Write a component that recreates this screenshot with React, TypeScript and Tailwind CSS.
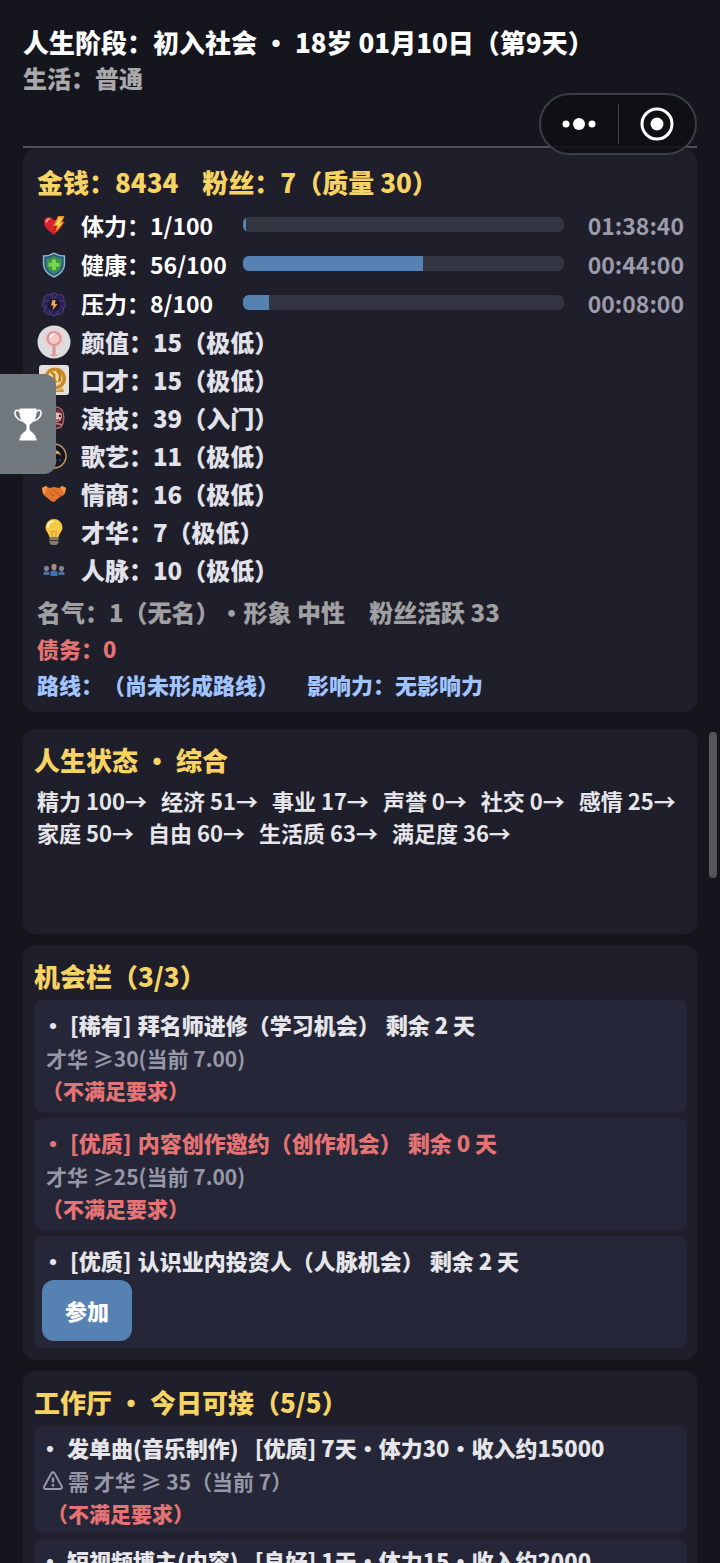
import type { ReactNode } from 'react'
import { clsx } from 'clsx'

const HeartIcon = () => (
  <svg viewBox="0 0 24 24" className="size-6">
    <path d="M12 21C7 17 2 13 2 8.500 2 5 4.300 3 7 3c2.200 0 3.800 1 5 3l3 1 1 6z" fill="#d8232f" />
    <path d="M4.500 8c0-1.800 1.200-2.800 2.800-2.800" stroke="#f79a94" strokeWidth="1.800" fill="none" strokeLinecap="round" />
    <path d="M12 21c4-4 7-6 9-10l-4-3-4 3z" fill="#a91b22" />
    <path d="M16 2h6.500l-2.500 6h2.500L13 19l2-7h-4z" fill="#f08c1f" />
    <path d="M17 3.500h3.500L17.500 9.500h2.500l-5 6.500 1.500-5h-3z" fill="#ffd45c" />
  </svg>
)

const ShieldIcon = () => (
  <svg viewBox="0 0 24 26" className="h-[26px] w-6">
    <path d="M12 1c3 2 6 3 10.500 3v8c0 6-4 10-10.500 13C5.500 22 1.500 18 1.500 12V4C6 4 9 3 12 1z" fill="#2d5a80" stroke="#8fb9cf" strokeWidth="1.400" />
    <path d="M12 4c2.500 1.500 5 2.200 7.800 2.500V12c0 4.500-3 7.600-7.800 10-4.800-2.400-7.800-5.500-7.800-10V6.500C7 6.200 9.500 5.500 12 4z" fill="#3a9150" />
    <path d="M10 7.500h4v3.300h3.500v4H14V18h-4v-3.200H6.500v-4H10z" fill="#7bd44e" />
  </svg>
)

const StressIcon = () => (
  <svg viewBox="0 0 24 24" className="size-6">
    <g fill="#2b2350" stroke="#4a3c80" strokeWidth="1.200">
      <circle cx="12" cy="5" r="4" />
      <circle cx="6.500" cy="7" r="4.500" />
      <circle cx="17.500" cy="7" r="4.500" />
      <circle cx="4.500" cy="12.500" r="4" />
      <circle cx="19.500" cy="12.500" r="4" />
      <circle cx="7" cy="18" r="4.500" />
      <circle cx="17" cy="18" r="4.500" />
      <circle cx="12" cy="19.500" r="4" />
    </g>
    <circle cx="12" cy="13" r="6.500" fill="#1d1836" />
    <path d="M13.500 8h-3L9 13.500h2.500l-1 5L15.500 12h-2.500z" fill="#f3a552" />
  </svg>
)

const MirrorIcon = () => (
  <svg viewBox="0 0 34 34" className="size-[34px]">
    <circle cx="17" cy="17" r="16.500" fill="#dddcde" />
    <circle cx="17" cy="13.500" r="10.500" fill="#eccfd0" />
    <circle cx="17" cy="13.500" r="6.500" fill="#f4c8c9" stroke="#dc949a" strokeWidth="2.200" />
    <path d="M13.500 12c.5-1.800 1.600-2.600 3-2.800" stroke="#fff3f2" strokeWidth="2" fill="none" strokeLinecap="round" />
    <path d="M17 21v9" stroke="#dc949a" strokeWidth="3" strokeLinecap="round" />
    <path d="M14.500 30h5" stroke="#e3a3a7" strokeWidth="2" strokeLinecap="round" />
  </svg>
)

const SpeechIcon = () => (
  <svg viewBox="0 0 30 30" className="size-[30px]">
    <rect width="30" height="30" rx="3" fill="#e4e1dc" />
    <circle cx="16" cy="13.500" r="11" fill="#c98a2a" />
    <circle cx="16" cy="13.500" r="7.500" fill="#f2dba9" />
    <path d="M12 8c3 0 4 2 3 5l2 5M18 6c3 2 4 6 2 11" stroke="#c07f1f" strokeWidth="2.500" fill="none" />
    <path d="M8 24c4 2 12 2 16-1l1 4H8z" fill="#d69a35" />
  </svg>
)

const MaskIcon = () => (
  <svg viewBox="0 0 24 24" className="size-6">
    <path d="M5 3c4-3 12-3 15 1 3 5 2 13-1 17-4 2-10 2-14 0C1 16 1 8 5 3z" fill="#47242f" stroke="#a4666f" strokeWidth="1.400" />
    <ellipse cx="14.500" cy="10" rx="5.500" ry="6" fill="#e9b6b5" />
    <path d="M8 7c3-4 9-5 13-1l-1 2c-4-2-8-2-12 1z" fill="#6b3039" />
    <circle cx="13" cy="10" r="1.200" fill="#321b24" />
    <circle cx="18" cy="10" r="1.200" fill="#321b24" />
    <path d="M13 13.500c1.500 1.200 3 1.200 4.500 0" stroke="#9e303b" strokeWidth="1.500" fill="none" />
    <path d="M9 20c3-3 7-3 11-1" stroke="#c47a80" strokeWidth="1.800" fill="none" />
  </svg>
)

const SingIcon = () => (
  <svg viewBox="0 0 26 26" className="size-[26px]">
    <circle cx="13" cy="13" r="12" fill="#16141c" stroke="#c9a265" strokeWidth="1.400" />
    <path d="M13 7c4 0 6 2 7 6-1.500-2-3.500-2.500-7-2z" fill="#dba558" />
    <circle cx="15" cy="17.500" r="1" fill="#4b5578" />
    <circle cx="19" cy="17" r="1" fill="#4b5578" />
  </svg>
)

const HandshakeIcon = () => (
  <svg viewBox="0 0 26 18" className="h-[18px] w-[26px]">
    <path d="M1 3l4-2 3 2 5-1 5 1 3-2 4 2-2 7-4 2-6 5-3-1-6-5-2-2z" fill="#e2762f" />
    <path d="M12 5l3 2 5 4-1 1M9 8l4 3" stroke="#b9531e" strokeWidth="1" fill="none" />
    <path d="M1 3l4-2 1 1-3 7-1-1zM25 3l-4-2-1 1 3 7 1-1z" fill="#f29a4c" />
  </svg>
)

const BulbIcon = () => (
  <svg viewBox="0 0 20 28" className="h-7 w-5">
    <path d="M10 1a8.500 8.500 0 0 0-8.500 8.500C1.500 13 5 15.500 5.500 19.500h9c.5-4 4-6.500 4-10A8.500 8.500 0 0 0 10 1z" fill="#f6ca45" />
    <path d="M4 9c0-3 2-5 5-5.500" stroke="#fff3b5" strokeWidth="2" fill="none" strokeLinecap="round" />
    <path d="M8.500 19l-1-6 2.500 1 2.500-1-1 6" stroke="#d9982a" strokeWidth="1" fill="none" />
    <path d="M5.500 20h9v5l-2 2h-5l-2-2z" fill="#84796d" />
    <path d="M5.500 22.500h9" stroke="#3f3a3c" strokeWidth="1" />
  </svg>
)

const NetworkIcon = () => (
  <svg viewBox="0 0 22 14" className="h-[14px] w-[22px]">
    <rect x="1" y="3" width="5" height="5" rx="2" fill="#85828e" />
    <path d="M.5 12V9.500L3 8l3.500 1.500V12z" fill="#4c6f9f" />
    <rect x="16" y="3" width="5" height="5" rx="2" fill="#85828e" />
    <path d="M15.500 12V9.500L18.500 8l3 1.500V12z" fill="#4c6f9f" />
    <rect x="8.500" y="1" width="5" height="6" rx="2" fill="#b0917f" />
    <path d="M7.500 13V8.500L11 7l3.500 1.500V13z" fill="#3b70b5" />
  </svg>
)

const TrophyIcon = () => (
  <svg viewBox="0 0 28 33" className="h-[33px] w-7">
    <path d="M6 4.500C5 1.500 1 1.500 1 5c0 4 3 6.500 7.500 8M22 4.500c1-3 5-3 5 .500 0 4-3 6.500-7.500 8" fill="none" stroke="#fff" strokeWidth="1.600" />
    <path d="M5.500.500h17c.3 6-.500 10.500-3 13-1.500 1.500-3.300 2.500-4 3.500v4c0 2.500 4 3 5 6h1v3h1v2.500h-17V30h1v-3h1c1-3 5-3.500 5-6v-4c-.7-1-2.500-2-4-3.500-2.500-2.500-3.300-7-3-13z" fill="#fff" />
  </svg>
)

const WarningIcon = () => (
  <svg viewBox="0 0 22 20" className="h-5 w-[22px]" fill="none" stroke="currentColor" strokeWidth="2" strokeLinejoin="round">
    <path d="M9.400 2.200a1.900 1.900 0 0 1 3.200 0l7.200 13.300a1.700 1.700 0 0 1-1.500 2.500H3.700a1.700 1.700 0 0 1-1.500-2.500z" />
    <path d="M11 6.500v5M11 13v2.400" strokeWidth="2.400" />
  </svg>
)

const vitals = [
  { label: '体力', value: 1, time: '01:38:40', icon: <HeartIcon /> },
  { label: '健康', value: 56, time: '00:44:00', icon: <ShieldIcon /> },
  { label: '压力', value: 8, time: '00:08:00', icon: <StressIcon /> },
]

const attributes = [
  { text: '颜值：15（极低）', icon: <MirrorIcon /> },
  { text: '口才：15（极低）', icon: <SpeechIcon /> },
  { text: '演技：39（入门）', icon: <MaskIcon /> },
  { text: '歌艺：11（极低）', icon: <SingIcon /> },
  { text: '情商：16（极低）', icon: <HandshakeIcon /> },
  { text: '才华：7（极低）', icon: <BulbIcon /> },
  { text: '人脉：10（极低）', icon: <NetworkIcon /> },
]

const lifeStates = [
  '精力 100→',
  '经济 51→',
  '事业 17→',
  '声誉 0→',
  '社交 0→',
  '感情 25→',
  '家庭 50→',
  '自由 60→',
  '生活质 63→',
  '满足度 36→',
]

const opportunities = [
  { tag: '[稀有]', name: '拜名师进修（学习机会）', left: '剩余 2 天', need: '才华 ≥30(当前 7.00)' },
  { tag: '[优质]', name: '内容创作邀约（创作机会）', left: '剩余 0 天', need: '才华 ≥25(当前 7.00)', urgent: true },
  { tag: '[优质]', name: '认识业内投资人（人脉机会）', left: '剩余 2 天' },
]

const jobs = [
  { name: '发单曲(音乐制作)', detail: '[优质] 7天・体力30・收入约15000', need: '需 才华 ≥ 35（当前 7）' },
  { name: '短视频博主(内容)', detail: '[良好] 1天・体力15・收入约2000', need: '需 才华 ≥ 20（当前 7）' },
]

function IconSlot({ children }: { children: ReactNode }) {
  return <span className="flex w-[34px] shrink-0 items-center justify-center">{children}</span>
}

function Panel({ title, className, children }: { title: string; className?: string; children: ReactNode }) {
  return (
    <section className={clsx('rounded-xl bg-[#1f1e2b] pt-2 pr-[10px] pl-[11px]', className)}>
      <h2 className="h-[47px] text-[26px] leading-[46px] text-[#f7d364]">{title}</h2>
      {children}
    </section>
  )
}

export default function App() {
  return (
    <div className="relative h-screen overflow-hidden bg-[#15151e] font-['Noto_Sans_CJK_SC',sans-serif] font-black whitespace-nowrap [text-spacing-trim:space-all]">
      <main className="flex flex-col px-[23px]">
        <header className="h-[148px] border-b-2 border-[#504f5b] pt-6">
          <h1 className="text-[26px] leading-9 text-white">人生阶段：初入社会 ・ 18岁 01月10日（第9天）</h1>
          <p className="text-2xl leading-9 text-[#a9a9ab]">生活：普通</p>
        </header>

        <section className="mt-px rounded-xl bg-[#1f1e2b] pt-[10px] pr-[13px] pb-[10px] pl-[14px]">
          <p className="h-[47px] text-[26px] leading-[45px] text-[#f7d364]">
            <span>金钱：8434</span>
            <span className="ml-6">粉丝：7（质量 30）</span>
          </p>
          {vitals.map((v) => (
            <div key={v.label} className="flex h-[39px] items-center">
              <IconSlot>{v.icon}</IconSlot>
              <span className="ml-[10px] w-[162px] text-[23px] font-bold text-white">
                {v.label}：{v.value}/100
              </span>
              <div className="mb-[3px] h-[15px] flex-1 overflow-hidden rounded-md bg-[#333543]">
                <div className="h-full bg-[#5582b3]" style={{ width: `${v.value}%` }} />
              </div>
              <span className="w-[120px] text-right text-[23px] font-bold text-[#9c9ba9]">{v.time}</span>
            </div>
          ))}
          <ul>
            {attributes.map((a) => (
              <li key={a.text} className="flex h-[38px] items-center gap-[10px] text-2xl text-[#e2e2ea]">
                <IconSlot>{a.icon}</IconSlot>
                {a.text}
              </li>
            ))}
          </ul>
          <div className="mt-[5px]">
            <p className="text-2xl leading-9 text-[#a0a0a2]">
              名气：1（无名）・形象 中性<span className="ml-6">粉丝活跃 33</span>
            </p>
            <p className="text-[22px] leading-9 text-[#e57373]">债务：0</p>
            <p className="text-[22px] leading-9 text-[#a0c4ff]">
              路线：（尚未形成路线）<span className="ml-7">影响力：无影响力</span>
            </p>
          </div>
        </section>

        <Panel title="人生状态 ・ 综合" className="mt-[17px] min-h-[205px]">
          <div className="flex flex-wrap gap-x-[14px] pl-[3px] text-[22px] leading-8 font-bold text-[#e6e6ea]">
            {lifeStates.map((s) => (
              <span key={s}>{s}</span>
            ))}
          </div>
        </Panel>

        <Panel title="机会栏（3/3）" className="mt-[11px] pb-3">
          <ul className="flex flex-col gap-[6px]">
            {opportunities.map((o) => (
              <li key={o.name} className="h-[112px] rounded-lg bg-[#252637] px-2 pt-[6px]">
                <p className={clsx('flex text-[22px] leading-9', o.urgent ? 'text-[#e57373]' : 'text-[#e6e6ea]')}>
                  <span className="mr-[6px]">・</span>
                  <span className="mr-[6px]">{o.tag}</span>
                  <span className="mr-[6px]">{o.name}</span>
                  <span>{o.left}</span>
                </p>
                {o.need ? (
                  <>
                    <p className="pl-1 text-[21px] leading-8 font-bold text-[#9698a8]">{o.need}</p>
                    <p className="text-[21px] leading-8 text-[#e57373]">（不满足要求）</p>
                  </>
                ) : (
                  <button type="button" className="mt-[2px] rounded-xl bg-[#5582b3] px-[23px] py-[14px] text-[22px] leading-[33px] text-white">
                    参加
                  </button>
                )}
              </li>
            ))}
          </ul>
        </Panel>

        <Panel title="工作厅 ・ 今日可接（5/5）" className="mt-[11px] pb-3">
          <ul className="flex flex-col gap-[6px]">
            {jobs.map((j) => (
              <li key={j.name} className="h-[107px] rounded-lg bg-[#252637] px-[5px] pt-[3px]">
                <p className="flex text-[22px] leading-9 text-[#e6e6ea]">
                  <span className="mr-[6px]">・</span>
                  <span className="mr-4">{j.name}</span>
                  <span>{j.detail}</span>
                </p>
                <p className="flex items-center gap-1 pl-[3px] text-[21px] leading-8 font-bold text-[#9698a8]">
                  <WarningIcon />
                  {j.need}
                </p>
                <p className="pl-2 text-[21px] leading-8 text-[#e57373]">（不满足要求）</p>
              </li>
            ))}
          </ul>
        </Panel>
      </main>

      <div className="absolute top-[93px] right-[23px] flex h-[62px] w-[158px] items-center rounded-full border-2 border-[#3d3d45] bg-[#0e0e13]/85">
        <button type="button" aria-label="更多" className="flex flex-1 justify-center">
          <svg viewBox="0 0 34 16" className="h-4 w-[34px]" fill="#fff">
            <circle cx="4" cy="8" r="3.500" />
            <circle cx="17" cy="8" r="6" />
            <circle cx="30" cy="8" r="3.500" />
          </svg>
        </button>
        <span className="h-10 w-px bg-[#3d3d45]" />
        <button type="button" aria-label="关闭" className="flex flex-1 justify-center">
          <svg viewBox="0 0 34 34" className="size-[34px]">
            <circle cx="17" cy="17" r="15" fill="none" stroke="#fff" strokeWidth="3" />
            <circle cx="17" cy="17" r="6.500" fill="#fff" />
          </svg>
        </button>
      </div>

      <button
        type="button"
        aria-label="成就"
        className="absolute top-[374px] left-0 flex h-[100px] w-14 items-center justify-center rounded-r-xl bg-[#70777d]"
      >
        <TrophyIcon />
      </button>

      <div className="absolute top-[732px] right-[3px] h-[146px] w-2 rounded-full bg-[#565658]" />
    </div>
  )
}
